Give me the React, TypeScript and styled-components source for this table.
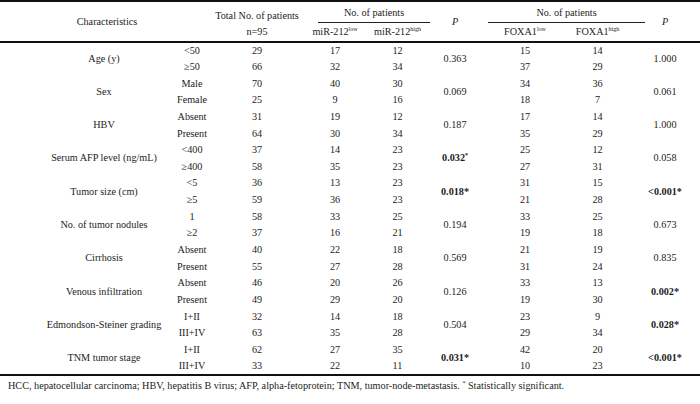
import React from "react";
import styled, { createGlobalStyle } from "styled-components";

const Global = createGlobalStyle`
  html, body { margin: 0; padding: 0; background: #fff; }
  body { font-family: "Liberation Serif", "Times New Roman", serif; color: #1c1c1c; }
`;

const Page = styled.div`
  width: 700px;
  display: flex;
  flex-direction: column;
`;

const Table = styled.table`
  width: 700px;
  border-collapse: collapse;
  table-layout: fixed;
  font-size: 10.2px;
  border-top: 2px solid #111;
  border-bottom: 2px solid #111;
`;

const HeadRow = styled.tr`
  height: auto;
`;

const HeadCell = styled.th<{ $bottom?: boolean; $italic?: boolean; $h?: number; $valign?: string }>`
  font-weight: normal;
  font-style: ${(p) => (p.$italic ? "italic" : "normal")};
  text-align: center;
  vertical-align: ${(p) => p.$valign ?? "middle"};
  padding: 0;
  height: ${(p) => (p.$h ? `${p.$h}px` : "auto")};
  box-sizing: border-box;
  white-space: nowrap;
  line-height: 12px;
  border-bottom: ${(p) => (p.$bottom ? "2px solid #111" : "none")};
`;

const GroupCell = styled.th<{ $h: number }>`
  font-weight: normal;
  padding: 0;
  height: ${(p) => p.$h}px;
  vertical-align: bottom;
`;

const GroupLabel = styled.div<{ $ml: number; $mr: number }>`
  margin: 0 ${(p) => p.$mr}px 0 ${(p) => p.$ml}px;
  border-bottom: 1px solid #222;
  line-height: 12px;
  padding-bottom: 3px;
  text-align: center;
  white-space: nowrap;
`;

const BodyRow = styled.tr``;

const Cell = styled.td<{ $bold?: boolean; $pl?: number }>`
  text-align: center;
  vertical-align: middle;
  padding: 0 0 0 ${(p) => p.$pl ?? 0}px;
  height: 16.65px;
  box-sizing: border-box;
  line-height: 12px;
  white-space: nowrap;
  font-weight: ${(p) => (p.$bold ? "bold" : "normal")};
`;

const Sup = styled.sup`
  font-size: 6px;
  line-height: 0;
  vertical-align: 4px;
`;

const Footer = styled.div`
  font-size: 10.2px;
  line-height: 12px;
  padding: 4px 0 0 8px;
  white-space: nowrap;
`;

type PVal = { v: string; bold?: boolean; supStar?: boolean };

type Row = {
  label: string;
  sub: [string, string];
  total: [number, number];
  mlow: [number, number];
  mhigh: [number, number];
  p1: PVal;
  flow: [number, number];
  fhigh: [number, number];
  p2: PVal;
};

const rows: Row[] = [
  { label: "Age (y)", sub: ["<50", "≥50"], total: [29, 66], mlow: [17, 32], mhigh: [12, 34], p1: { v: "0.363" }, flow: [15, 37], fhigh: [14, 29], p2: { v: "1.000" } },
  { label: "Sex", sub: ["Male", "Female"], total: [70, 25], mlow: [40, 9], mhigh: [30, 16], p1: { v: "0.069" }, flow: [34, 18], fhigh: [36, 7], p2: { v: "0.061" } },
  { label: "HBV", sub: ["Absent", "Present"], total: [31, 64], mlow: [19, 30], mhigh: [12, 34], p1: { v: "0.187" }, flow: [17, 35], fhigh: [14, 29], p2: { v: "1.000" } },
  { label: "Serum AFP level (ng/mL)", sub: ["<400", "≥400"], total: [37, 58], mlow: [14, 35], mhigh: [23, 23], p1: { v: "0.032", bold: true, supStar: true }, flow: [25, 27], fhigh: [12, 31], p2: { v: "0.058" } },
  { label: "Tumor size (cm)", sub: ["<5", "≥5"], total: [36, 59], mlow: [13, 36], mhigh: [23, 23], p1: { v: "0.018*", bold: true }, flow: [31, 21], fhigh: [15, 28], p2: { v: "<0.001*", bold: true } },
  { label: "No. of tumor nodules", sub: ["1", "≥2"], total: [58, 37], mlow: [33, 16], mhigh: [25, 21], p1: { v: "0.194" }, flow: [33, 19], fhigh: [25, 18], p2: { v: "0.673" } },
  { label: "Cirrhosis", sub: ["Absent", "Present"], total: [40, 55], mlow: [22, 27], mhigh: [18, 28], p1: { v: "0.569" }, flow: [21, 31], fhigh: [19, 24], p2: { v: "0.835" } },
  { label: "Venous infiltration", sub: ["Absent", "Present"], total: [46, 49], mlow: [20, 29], mhigh: [26, 20], p1: { v: "0.126" }, flow: [33, 19], fhigh: [13, 30], p2: { v: "0.002*", bold: true } },
  { label: "Edmondson-Steiner grading", sub: ["I+II", "III+IV"], total: [32, 63], mlow: [14, 35], mhigh: [18, 28], p1: { v: "0.504" }, flow: [23, 29], fhigh: [9, 34], p2: { v: "0.028*", bold: true } },
  { label: "TNM tumor stage", sub: ["I+II", "III+IV"], total: [62, 33], mlow: [27, 22], mhigh: [35, 11], p1: { v: "0.031*", bold: true }, flow: [42, 10], fhigh: [20, 23], p2: { v: "<0.001*", bold: true } },
];

const widths = [170, 44, 86, 70, 55, 60, 80, 65, 70];

const PCell: React.FC<{ p: PVal }> = ({ p }) => (
  <Cell rowSpan={2} $bold={p.bold}>
    {p.v}
    {p.supStar && <Sup>*</Sup>}
  </Cell>
);

export default function App() {
  return (
    <Page>
      <Global />
      <Table>
        <colgroup>
          {widths.map((w, i) => (
            <col key={i} style={{ width: w }} />
          ))}
        </colgroup>
        <thead>
          <HeadRow>
            <HeadCell rowSpan={2} colSpan={2} $bottom>
              <span style={{ display: "inline-block", width: 208 }}>Characteristics</span>
            </HeadCell>
            <HeadCell $h={21} $valign="bottom" style={{ paddingBottom: 1 }}>Total No. of patients</HeadCell>
            <GroupCell colSpan={2} $h={21}>
              <GroupLabel $ml={18} $mr={-5}>No. of patients</GroupLabel>
            </GroupCell>
            <HeadCell rowSpan={2} $bottom $italic>P</HeadCell>
            <GroupCell colSpan={2} $h={21}>
              <GroupLabel $ml={3} $mr={-15}>No. of patients</GroupLabel>
            </GroupCell>
            <HeadCell rowSpan={2} $bottom $italic>P</HeadCell>
          </HeadRow>
          <HeadRow>
            <HeadCell $bottom $h={19}>n=95</HeadCell>
            <HeadCell $bottom $h={19}>
              miR-212<Sup>low</Sup>
            </HeadCell>
            <HeadCell $bottom $h={19}>
              miR-212<Sup>high</Sup>
            </HeadCell>
            <HeadCell $bottom $h={19}>
              FOXA1<Sup>low</Sup>
            </HeadCell>
            <HeadCell $bottom $h={19}>
              FOXA1<Sup>high</Sup>
            </HeadCell>
          </HeadRow>
        </thead>
        <tbody>
          {rows.map((r) => (
            <React.Fragment key={r.label}>
              <BodyRow>
                <Cell rowSpan={2} $pl={38}>{r.label}</Cell>
                <Cell>{r.sub[0]}</Cell>
                <Cell>{r.total[0]}</Cell>
                <Cell>{r.mlow[0]}</Cell>
                <Cell>{r.mhigh[0]}</Cell>
                <PCell p={r.p1} />
                <Cell>{r.flow[0]}</Cell>
                <Cell>{r.fhigh[0]}</Cell>
                <PCell p={r.p2} />
              </BodyRow>
              <BodyRow>
                <Cell>{r.sub[1]}</Cell>
                <Cell>{r.total[1]}</Cell>
                <Cell>{r.mlow[1]}</Cell>
                <Cell>{r.mhigh[1]}</Cell>
                <Cell>{r.flow[1]}</Cell>
                <Cell>{r.fhigh[1]}</Cell>
              </BodyRow>
            </React.Fragment>
          ))}
        </tbody>
      </Table>
      <Footer>
        HCC, hepatocellular carcinoma; HBV, hepatitis B virus; AFP, alpha-fetoprotein; TNM, tumor-node-metastasis.{" "}
        <Sup>*</Sup> Statistically significant.
      </Footer>
    </Page>
  );
}
